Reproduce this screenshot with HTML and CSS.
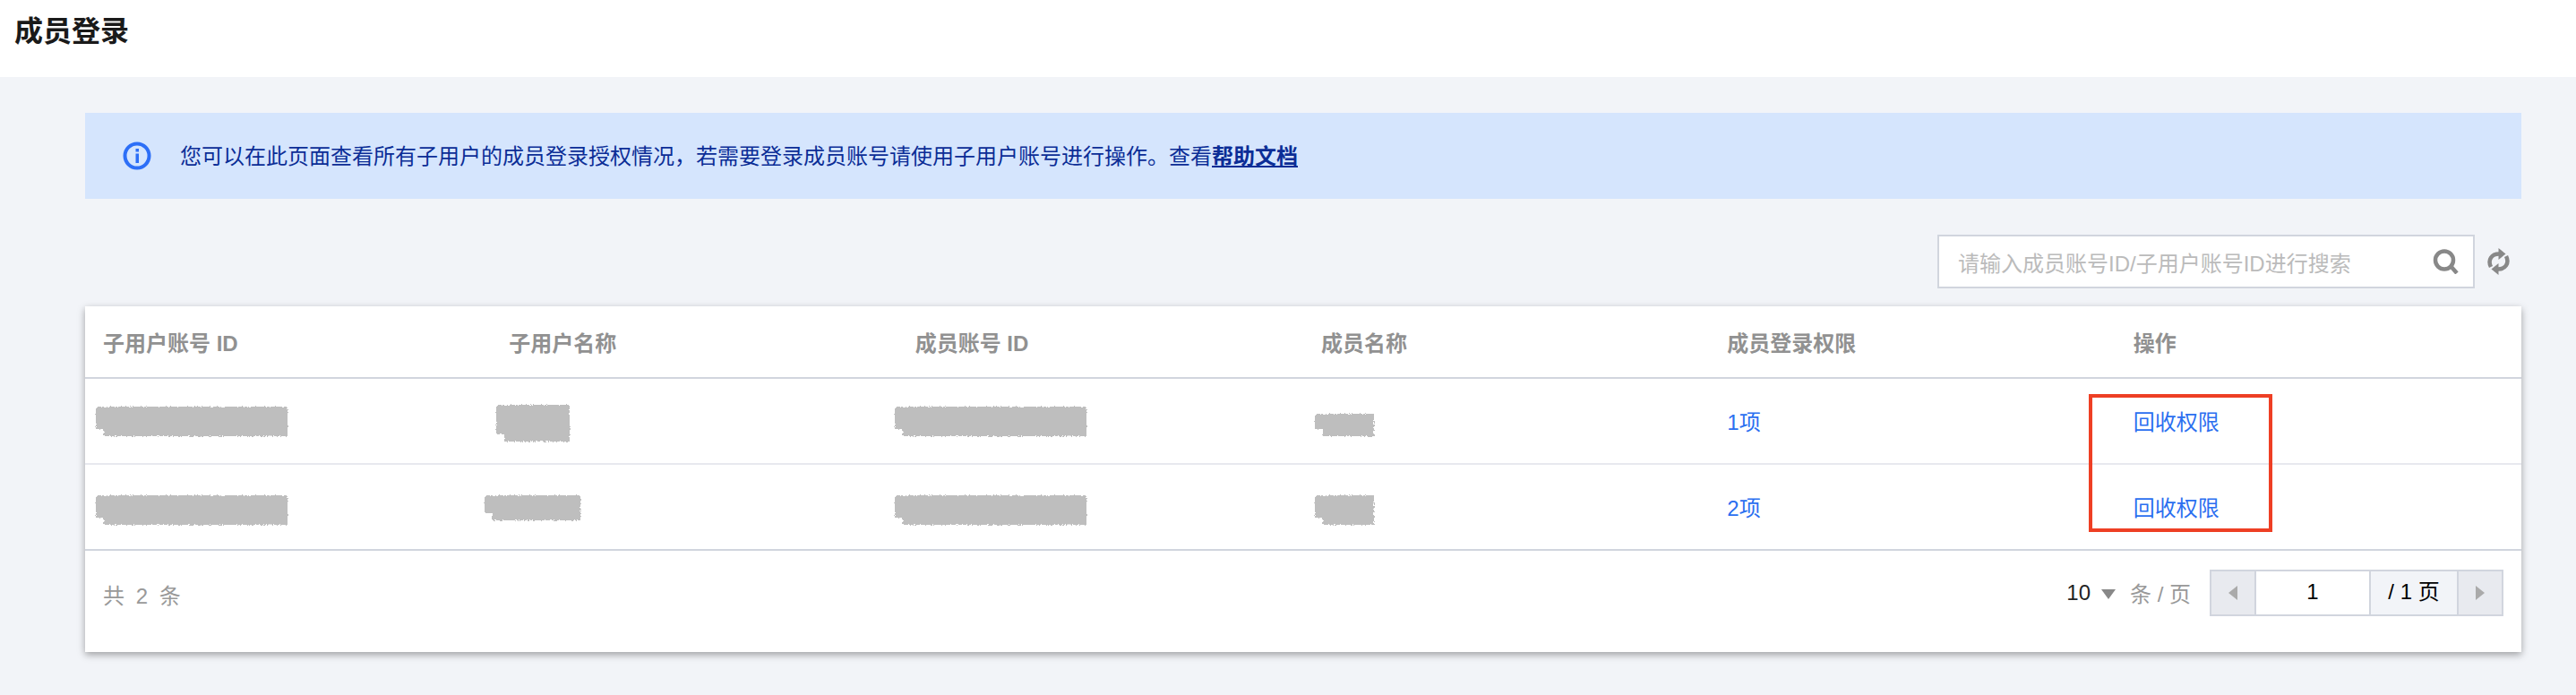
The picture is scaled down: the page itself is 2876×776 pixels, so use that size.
FILE: index.html
```html
<!DOCTYPE html>
<html>
  <head>
    <meta charset="utf-8">
    <title>成员登录</title>
    <link rel="stylesheet" href="styles.css">
  </head>
  <body>
    <!-- rough edge for the redacted cells -->
    <svg class="defs" width="0" height="0">
      <filter id="rough" x="-5%" y="-20%" width="110%" height="140%">
        <feTurbulence type="fractalNoise" baseFrequency="0.6" numOctaves="2" seed="4"/>
        <feDisplacementMap in="SourceGraphic" scale="4"/>
      </filter>
    </svg>

    <div class="header">
      <h2 class="title">成员登录</h2>
    </div>

    <div class="main">
      <div class="notice">
        <svg class="notice-icon" width="32" height="32" viewBox="0 0 32 32">
          <circle cx="16" cy="16" r="13.5" fill="none" stroke="#2d6ff7" stroke-width="4"/>
          <rect x="14.5" y="8" width="3.5" height="3.5" fill="#2d6ff7"/>
          <rect x="14.5" y="13.5" width="3.5" height="10.5" fill="#2d6ff7"/>
        </svg>
        <p class="notice-text">您可以在此页面查看所有子用户的成员登录授权情况，若需要登录成员账号请使用子用户账号进行操作。查看<a class="notice-link">帮助文档</a></p>
      </div>

      <div class="toolbar">
        <div class="search">
          <span class="search-hint">请输入成员账号ID/子用户账号ID进行搜索</span>
          <svg width="29" height="28" viewBox="0 0 29 28">
            <circle cx="13" cy="12.5" r="10" fill="none" stroke="#888" stroke-width="4.5"/>
            <path d="M20 19l7 8" fill="none" stroke="#888" stroke-width="4.5"/>
          </svg>
        </div>
        <svg class="refresh" width="25" height="30" viewBox="0 0 25 30">
          <path d="M4 21C0 13 5 6.500 13 6.500" fill="none" stroke="#888" stroke-width="4.500"/>
          <path d="M21 9C25 17 20 23.500 12 23.500" fill="none" stroke="#888" stroke-width="4.500"/>
          <path d="M12.500 0l8 6.500-8 6.500z" fill="#888"/>
          <path d="M12.500 30l-8-6.500 8-6.500z" fill="#888"/>
        </svg>
      </div>

      <div class="card">
        <table class="members">
          <tr>
            <th>子用户账号 ID</th>
            <th>子用户名称</th>
            <th>成员账号 ID</th>
            <th>成员名称</th>
            <th>成员登录权限</th>
            <th>操作</th>
          </tr>
          <tr>
            <td><span class="mask mask-sub-id"></span></td>
            <td><span class="mask mask-name-a"></span></td>
            <td><span class="mask mask-member-id"></span></td>
            <td><span class="mask mask-short-a"></span></td>
            <td><a class="link">1项</a></td>
            <td><a class="link">回收权限</a></td>
          </tr>
          <tr class="row-b">
            <td><span class="mask mask-sub-id"></span></td>
            <td><span class="mask mask-name-b"></span></td>
            <td><span class="mask mask-member-id"></span></td>
            <td><span class="mask mask-short-b"></span></td>
            <td><a class="link">2项</a></td>
            <td><a class="link">回收权限</a></td>
          </tr>
        </table>

        <div class="footer">
          <span class="total">共 2 条</span>
          <div class="pager">
            <span class="page-size">10</span>
            <span class="caret"></span>
            <span class="per-page">条 / 页</span>
            <div class="pages">
              <span class="page-btn"><i class="arrow-left"></i></span>
              <span class="page-input">1</span>
              <span class="page-count">/ 1 页</span>
              <span class="page-btn"><i class="arrow-right"></i></span>
            </div>
          </div>
        </div>

        <div class="highlight"></div>
      </div>
    </div>
  </body>
</html>
```

FILE: styles.css
```css
* {
  box-sizing: border-box;
}

body {
  margin: 0;
  background: #f2f4f8;
  color: #000;
  font-family: "Liberation Sans", "Noto Sans CJK SC", sans-serif;
  font-size: 24px;
}

.defs {
  position: absolute;
}

.header {
  height: 86px;
  padding: 15px 16px 0;
  background: #fff;
}

.title {
  margin: 0;
  font-size: 32px;
  line-height: 40px;
  font-weight: 700;
  color: #1a1a1a;
}

.main {
  padding: 40px 61px 48px 95px;
}

.notice {
  display: flex;
  align-items: center;
  gap: 32px;
  height: 96px;
  padding-left: 42px;
  background: #d5e5fd;
}

.notice-text {
  margin: 0 0 3px;
  color: #0b2d96;
}

.notice-link {
  font-weight: 700;
  text-decoration: underline;
}

.toolbar {
  display: flex;
  justify-content: flex-end;
  align-items: center;
  gap: 14px;
  margin: 40px 13px 20px 0;
}

.search {
  display: flex;
  justify-content: space-between;
  align-items: center;
  width: 600px;
  height: 60px;
  padding: 0 16px 0 21px;
  background: #fff;
  border: 2px solid #d1d5de;
}

.search-hint {
  color: #bbb;
}

.card {
  position: relative;
  height: 386px;
  background: #fff;
  box-shadow: 0 3px 8px rgba(0,0,0,0.35);
}

.members {
  width: 100%;
  table-layout: fixed;
  border-collapse: separate;
  border-spacing: 0;
}

.members th {
  height: 81px;
  padding: 0 0 0 20px;
  text-align: left;
  color: #919191;
  font-weight: 700;
  border-bottom: 2px solid #d1d5de;
}

.members td {
  position: relative;
  height: 96px;
  padding: 0 0 2px 20px;
  border-bottom: 2px solid #e8e9ef;
}

.members tr:last-child td {
  border-bottom-color: #d1d5de;
}

.link {
  color: #2b6ff0;
}

/* redacted values, they sit over the cell at the spot they cover */
.mask {
  position: absolute;
  display: block;
  background: #bebebe;
  filter: url(#rough);
}

.mask::after {
  content: "";
  position: absolute;
  left: 0;
  bottom: 0;
  width: 9px;
  height: 8px;
  background: #fff;
}

.mask-sub-id,
.mask-member-id {
  top: 31px;
  width: 214px;
  height: 33px;
}

.mask-sub-id {
  left: 12px;
}

.mask-member-id {
  left: -3px;
}

.row-b .mask-sub-id,
.row-b .mask-member-id {
  top: 34px;
}

.mask-name-a {
  left: 6px;
  top: 29px;
  width: 82px;
  height: 41px;
}

.mask-name-b {
  left: -7px;
  top: 34px;
  width: 107px;
  height: 28px;
}

.mask-short-a {
  left: 13px;
  top: 39px;
  width: 66px;
  height: 25px;
}

.mask-short-b {
  left: 13px;
  top: 34px;
  width: 66px;
  height: 33px;
}

.footer {
  display: flex;
  justify-content: space-between;
  align-items: center;
  height: 111px;
  padding: 0 20px 18px 20px;
}

.total {
  margin-top: 4px;
  color: #999;
  word-spacing: 6px;
}

.pager {
  display: flex;
  align-items: center;
}

.page-size {
  color: #222;
}

.caret {
  width: 0;
  height: 0;
  margin: 3px 16px 0 12px;
  border-left: 8px solid transparent;
  border-right: 8px solid transparent;
  border-top: 11px solid #888;
}

.per-page {
  margin-right: 21px;
  color: #999;
}

.pages {
  display: flex;
  width: 328px;
  height: 52px;
  border: 2px solid #d1d5de;
  line-height: 46px;
  text-align: center;
}

.page-btn {
  display: flex;
  justify-content: center;
  align-items: center;
  width: 48px;
  background: #e8eaef;
}

.page-input {
  width: 130px;
  background: #fff;
  border-left: 2px solid #d1d5de;
  border-right: 2px solid #d1d5de;
}

.page-count {
  width: 98px;
  background: #f2f4f8;
  border-right: 2px solid #d1d5de;
}

.arrow-left,
.arrow-right {
  width: 0;
  height: 0;
  border-top: 8px solid transparent;
  border-bottom: 8px solid transparent;
}

.arrow-left {
  border-right: 10px solid #aaa;
}

.arrow-right {
  border-left: 10px solid #aaa;
}

/* red annotation box drawn on the screenshot */
.highlight {
  position: absolute;
  left: 2237px;
  top: 98px;
  width: 205px;
  height: 154px;
  border: 4px solid #ee3f24;
}
```
